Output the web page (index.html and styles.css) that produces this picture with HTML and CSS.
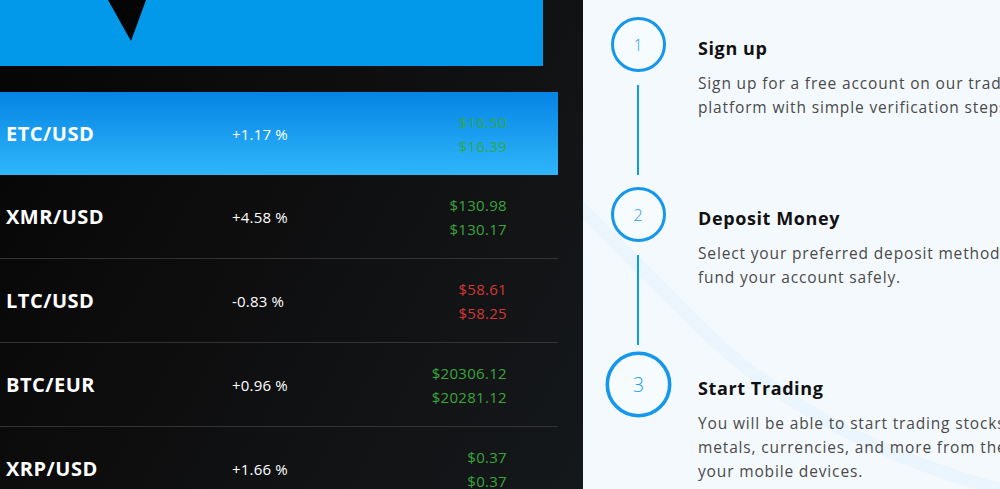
FILE: index.html
```html
<!DOCTYPE html>
<html lang="en">
<head>
<meta charset="utf-8">
<title>Markets and steps</title>
<link rel="stylesheet" href="styles.css">
</head>
<body>
<div class="page">
  <section class="market">
    <div class="banner"><span class="banner-notch"></span></div>
    <div class="rates">
      <div class="rate rate-active">
        <span class="pair">ETC/USD</span>
        <span class="change">+1.17 %</span>
        <span class="prices up"><span>$16.50</span><span>$16.39</span></span>
      </div>
      <div class="rate">
        <span class="pair">XMR/USD</span>
        <span class="change">+4.58 %</span>
        <span class="prices up"><span>$130.98</span><span>$130.17</span></span>
      </div>
      <div class="rate">
        <span class="pair">LTC/USD</span>
        <span class="change">-0.83 %</span>
        <span class="prices down"><span>$58.61</span><span>$58.25</span></span>
      </div>
      <div class="rate">
        <span class="pair">BTC/EUR</span>
        <span class="change">+0.96 %</span>
        <span class="prices up"><span>$20306.12</span><span>$20281.12</span></span>
      </div>
      <div class="rate">
        <span class="pair">XRP/USD</span>
        <span class="change">+1.66 %</span>
        <span class="prices up"><span>$0.37</span><span>$0.37</span></span>
      </div>
    </div>
  </section>
  <section class="steps">
    <svg class="steps-deco" width="417" height="489" viewBox="0 0 417 489" aria-hidden="true">
      <path d="M-6 204 L116 326 Q 230 440 425 492" stroke="#eaf5fd" stroke-width="13" fill="none"/>
    </svg>
    <div class="step">
      <div class="step-marker">
        <span class="step-circle">1</span>
        <span class="step-line"></span>
      </div>
      <div class="step-text">
        <h3 class="step-title">Sign up</h3>
        <p class="step-desc">Sign up for a free account on our trading platform with simple verification steps.</p>
      </div>
    </div>
    <div class="step">
      <div class="step-marker">
        <span class="step-circle">2</span>
        <span class="step-line"></span>
      </div>
      <div class="step-text">
        <h3 class="step-title">Deposit Money</h3>
        <p class="step-desc">Select your preferred deposit method and fund your account safely.</p>
      </div>
    </div>
    <div class="step">
      <div class="step-marker">
        <span class="step-circle step-circle-active">3</span>
      </div>
      <div class="step-text">
        <h3 class="step-title">Start Trading</h3>
        <p class="step-desc">You will be able to start trading stocks, metals, currencies, and more from the web or your mobile devices.</p>
      </div>
    </div>
  </section>
</div>
</body>
</html>
```
FILE: styles.css
```css
html, body {
  margin: 0;
  padding: 0;
}
body {
  width: 1000px;
  height: 489px;
  overflow: hidden;
  font-family: "Open Sans", "Noto Sans", sans-serif;
}
.page {
  display: flex;
  width: 1000px;
  height: 489px;
  overflow: hidden;
}
.market {
  width: 583px;
  flex: none;
  background: linear-gradient(120deg, #050505 0%, #0e0e0f 45%, #15181b 100%);
}
.banner {
  width: 543px;
  height: 66px;
  background: #0399ea;
  position: relative;
}
.banner-notch {
  position: absolute;
  left: 108px;
  top: 0;
  width: 0;
  height: 0;
  border-left: 23px solid transparent;
  border-right: 15px solid transparent;
  border-top: 41px solid #050505;
}
.rates {
  margin-top: 26px;
  width: 558px;
}
.rate {
  display: grid;
  grid-template-columns: 226px 1fr auto;
  align-items: center;
  height: 84px;
  box-sizing: border-box;
  padding: 0 51px 0 6px;
  border-bottom: 1px solid #333;
  color: #fff;
}
.rate-active {
  height: 83px;
  border-bottom: none;
  background: linear-gradient(180deg, #0584e5 0%, #2fb6f9 100%);
}
.pair {
  font-weight: 700;
  font-size: 20px;
  letter-spacing: 0.5px;
}
.change {
  font-size: 15px;
  letter-spacing: 0.2px;
}
.prices {
  display: flex;
  flex-direction: column;
  font-size: 15px;
  line-height: 24px;
  letter-spacing: 0.3px;
}
.up { color: #3aa53c; }
.down { color: #d23636; }
.rate-active .up { color: #2ea84a; }

.steps {
  flex: 1;
  position: relative;
  background: #f4f9fd;
  padding: 17px 0 0 27px;
  overflow: hidden;
}
.steps-deco {
  position: absolute;
  left: 0;
  top: 0;
  pointer-events: none;
}
.step {
  position: relative;
  display: flex;
  gap: 32px;
  height: 170px;
}
.step-marker {
  width: 56px;
  display: flex;
  flex-direction: column;
  align-items: center;
  flex: none;
}
.step-circle {
  width: 55px;
  height: 55px;
  box-sizing: border-box;
  border-radius: 50%;
  border: 3px solid #1597ec;
  display: flex;
  align-items: center;
  justify-content: center;
  font-size: 16px;
  font-weight: 300;
  color: #1a9cf0;
  background: #f6fbfe;
}
.step-circle-active {
  transform: scale(1.2);
}
.step-line {
  width: 2px;
  height: 90px;
  margin-top: 13px;
  background: #0a9cf0;
}
.step-text {
  padding-top: 19px;
  white-space: nowrap;
}
.step-title {
  margin: 0 0 11px;
  font-size: 18px;
  line-height: 24px;
  font-weight: 700;
  letter-spacing: 0.6px;
  color: #111;
}
.step-desc {
  margin: 0;
  width: 370px;
  white-space: normal;
  font-size: 15.5px;
  line-height: 24px;
  letter-spacing: 0.85px;
  color: #4a4a4a;
}
```
